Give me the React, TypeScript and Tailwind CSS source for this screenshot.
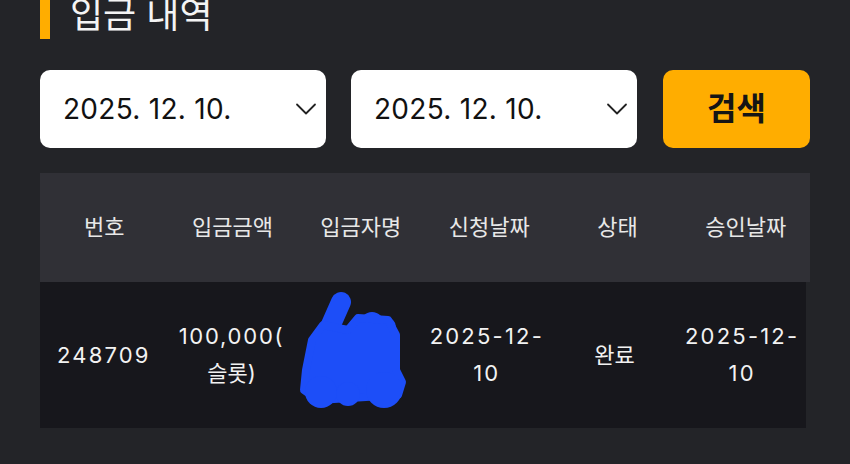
import React from "react";

const font = { fontFamily: '"Inter", "Noto Sans CJK KR", sans-serif' };

const DateBox = ({ value }: { value: string }) => (
  <div className="flex h-[78px] w-[286px] items-center justify-between rounded-[10px] bg-white pl-[23px] pr-[9px]">
    <span className="text-[28px] leading-none tracking-[0.01em] text-[#111]">{value}</span>
    <svg width="22" height="13" viewBox="0 0 22 13" fill="none">
      <path d="M2 1.5 L11 10.5 L20 1.5" stroke="#222" strokeWidth="1.8" strokeLinecap="round" strokeLinejoin="round" />
    </svg>
  </div>
);

// blue marker scribble hiding the depositor name
const Scribble = () => (
  <svg width="112" height="122" viewBox="0 0 112 122" className="-translate-x-[5px] -translate-y-[4px]">
    <g fill="#1d4ef8">
      <line x1="43" y1="12" x2="24" y2="55" stroke="#1d4ef8" strokeWidth="20" strokeLinecap="round" />
      <circle cx="74" cy="34" r="12" />
      <circle cx="88" cy="37" r="10" />
      <path
        d="M25 35 L50 40 L60 28 L90 30 L98 45 L98 80 L104 92 L100 105 L20 110 L6 100 L8 80 L14 50 Z"
        stroke="#1d4ef8"
        strokeWidth="8"
        strokeLinejoin="round"
      />
      <circle cx="23" cy="102" r="16" />
      <circle cx="50" cy="104" r="12" />
      <circle cx="86" cy="100" r="18" />
    </g>
  </svg>
);

const headers = ["번호", "입금금액", "입금자명", "신청날짜", "상태", "승인날짜"];

export default function App() {
  return (
    <div className="h-[464px] w-[850px] overflow-hidden bg-[#232428] px-[40px]" style={font}>
      <div className="flex h-[39px] items-end gap-[20px]">
        <div className="h-full w-[10px] bg-[#ffad00]" />
        <h2 className="mb-[6px] text-[36px] leading-[36px] text-[#f4f4f4]">입금 내역</h2>
      </div>

      <div className="mt-[31px] flex items-center gap-[25px]">
        <DateBox value="2025. 12. 10." />
        <DateBox value="2025. 12. 10." />
        <button className="ml-[1px] flex h-[78px] w-[147px] items-center justify-center rounded-[10px] bg-[#ffad00] text-[32px] font-bold text-[#151515]">
          검색
        </button>
      </div>

      <div className="mt-[25px] w-[770px]">
        <div className="grid h-[109px] grid-cols-6 items-center bg-[#303036] text-[22px] text-[#e8e8e8]">
          {headers.map((h) => (
            <div key={h} className="text-center">
              {h}
            </div>
          ))}
        </div>
        <div className="mr-[4px] grid h-[146px] grid-cols-6 items-center bg-[#17171c] text-[22px] leading-[37px] text-[#f2f2f2]">
          <div className="text-center tracking-[0.1em]">248709</div>
          <div className="text-center">
            <span className="tracking-[0.08em]">100,000(</span>
            <br />
            슬롯)
          </div>
          <div className="flex items-center justify-center">
            <Scribble />
          </div>
          <div className="text-center tracking-[0.1em]">
            2025-12-
            <br />
            10
          </div>
          <div className="text-center">완료</div>
          <div className="text-center tracking-[0.1em]">
            2025-12-
            <br />
            10
          </div>
        </div>
      </div>
    </div>
  );
}
